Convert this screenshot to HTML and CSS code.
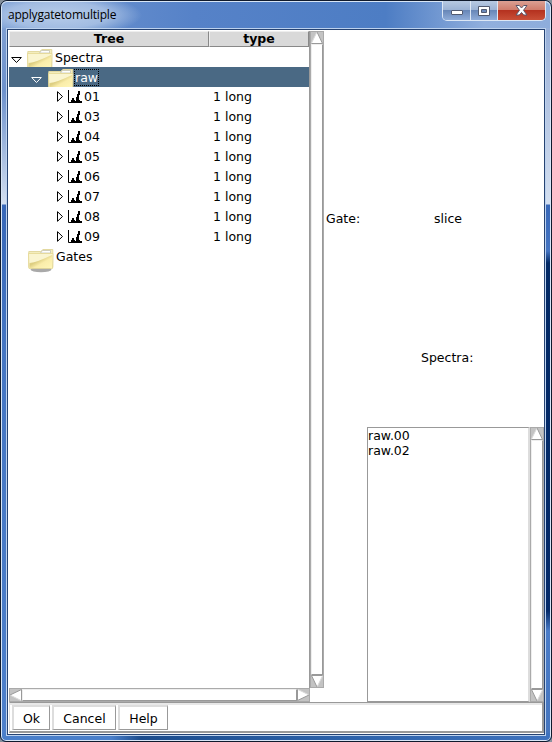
FILE: index.html
```html
<!DOCTYPE html>
<html lang="en">
<head>
<meta charset="utf-8">
<title>applygatetomultiple</title>
<link rel="stylesheet" href="styles.css">
</head>
<body>
<svg class="defs" aria-hidden="true">
  <defs>
    <linearGradient id="fold" x1="0" y1="0" x2="1" y2="1">
      <stop offset="0" stop-color="#eee3a0"/><stop offset=".4" stop-color="#dccd80"/><stop offset=".6" stop-color="#faedaa"/><stop offset="1" stop-color="#fff6b8"/>
    </linearGradient>
    <symbol id="folder" viewBox="0 0 26 24">
      <ellipse cx="13" cy="20.500" rx="10.500" ry="2.800" fill="#a9a9a9"/>
      <path d="M.8 2.500h12l2-2h10v18H.8z" fill="#f3edbd" stroke="#e3d9a0"/>
      <path d="M12.500 4l2-2.500h8V4z" fill="#fff" stroke="#c5c5b4" stroke-width=".8"/>
      <path d="M.5 4.500H25l-.5 15H1z" fill="#faf5d0" stroke="#e2d48b" stroke-width=".7"/>
      <path d="M1.500 14Q10 13 24 6v13H1.500z" fill="url(#fold)"/>
    </symbol>
    <symbol id="chart" viewBox="0 0 14 13">
      <path d="M.5 0v12.500H14" fill="none" stroke="#000"/>
      <path d="M3 12v-2h1V8h2v2h1v1h1V7h1V4h1V1h2v4h-1v5h1v1h2v1z"/>
    </symbol>
    <symbol id="open" viewBox="0 0 11 7"><path d="M.7.5h9.600L5.500 5.500z" fill="none" stroke="currentColor"/></symbol>
    <symbol id="shut" viewBox="0 0 7 11"><path d="M.5.7v9.600L5.500 5.500z" fill="#fff" stroke="#000"/></symbol>
    <symbol id="arrow" viewBox="0 0 12 12">
      <path d="M6 0L11.500 11.500H.5z" fill="#fff"/><path d="M6 0L.5 11" stroke="#ddd" fill="none"/><path d="M6 0L11.500 11.500H.5" stroke="#999" fill="none"/>
    </symbol>
  </defs>
</svg>
<div class="window">
  <header class="titlebar">
    <span class="title">applygatetomultiple</span>
    <div class="controls">
      <span class="ctl min"><svg width="12" height="5"><rect x=".5" y=".5" width="11" height="4" rx=".5" fill="#fff" stroke="#515a70"/></svg></span>
      <span class="ctl max"><svg width="12" height="10"><path d="M.5.5h11v9H.5zM3.500 3.500v3h5v-3z" fill="#fff" fill-rule="evenodd" stroke="#515a70"/></svg></span>
      <span class="ctl close"><svg width="13" height="11"><path d="M1 .5h3.300L6.500 3 8.700.5H12L8.500 5.300 12 10H8.700L6.500 7.500 4.300 10H1l3.500-4.700z" fill="#fff" stroke="#59566a"/></svg></span>
    </div>
  </header>
  <main class="client">
    <div class="content">
      <section class="left">
        <div class="treewrap">
          <div class="tree">
            <div class="head"><span class="h1">Tree</span><span class="h2">type</span></div>
            <div class="row root"><svg class="open"><use href="#open"/></svg><svg class="folder"><use href="#folder"/></svg><span>Spectra</span></div>
            <div class="row sub selected"><svg class="open"><use href="#open"/></svg><svg class="folder"><use href="#folder"/></svg><span class="focus">raw</span></div>
            <div class="row leaf"><svg class="shut"><use href="#shut"/></svg><svg class="chart"><use href="#chart"/></svg><span class="name">01</span><span>1 long</span></div>
            <div class="row leaf"><svg class="shut"><use href="#shut"/></svg><svg class="chart"><use href="#chart"/></svg><span class="name">03</span><span>1 long</span></div>
            <div class="row leaf"><svg class="shut"><use href="#shut"/></svg><svg class="chart"><use href="#chart"/></svg><span class="name">04</span><span>1 long</span></div>
            <div class="row leaf"><svg class="shut"><use href="#shut"/></svg><svg class="chart"><use href="#chart"/></svg><span class="name">05</span><span>1 long</span></div>
            <div class="row leaf"><svg class="shut"><use href="#shut"/></svg><svg class="chart"><use href="#chart"/></svg><span class="name">06</span><span>1 long</span></div>
            <div class="row leaf"><svg class="shut"><use href="#shut"/></svg><svg class="chart"><use href="#chart"/></svg><span class="name">07</span><span>1 long</span></div>
            <div class="row leaf"><svg class="shut"><use href="#shut"/></svg><svg class="chart"><use href="#chart"/></svg><span class="name">08</span><span>1 long</span></div>
            <div class="row leaf"><svg class="shut"><use href="#shut"/></svg><svg class="chart"><use href="#chart"/></svg><span class="name">09</span><span>1 long</span></div>
            <div class="row root last"><svg class="folder"><use href="#folder"/></svg><span>Gates</span></div>
          </div>
          <div class="scroll vert"><svg class="arr"><use href="#arrow"/></svg><div class="thumb"></div><svg class="arr down"><use href="#arrow"/></svg></div>
        </div>
        <div class="scroll horiz"><svg class="arr toleft"><use href="#arrow"/></svg><div class="thumb"></div><svg class="arr toright"><use href="#arrow"/></svg></div>
      </section>
      <section class="right">
        <div class="gate"><span class="label">Gate:</span><span class="value">slice</span></div>
        <div class="caption">Spectra:</div>
        <div class="listwrap">
          <div class="list"><div>raw.00</div><div>raw.02</div></div>
          <div class="scroll vert"><svg class="arr"><use href="#arrow"/></svg><div class="thumb"></div><svg class="arr down"><use href="#arrow"/></svg></div>
        </div>
      </section>
    </div>
    <footer class="actions"><button class="ok">Ok</button><button class="cancel">Cancel</button><button class="help">Help</button></footer>
  </main>
</div>
</body>
</html>
```
FILE: styles.css
```css
* { box-sizing: border-box; }
html { background: #85909c; }
body { margin: 0; font: 12.5px/15px "DejaVu Sans", sans-serif; color: #000; }
svg { display: block; flex: none; }
.defs { position: absolute; width: 0; height: 0; }
.window {
  width: 552px; height: 742px; padding: 0 6px 6px;
  border: 1px solid #101a2c; border-radius: 7px 7px 6px 6px;
  box-shadow: inset 0 0 0 1px #d8e6f6;
  background:
    linear-gradient(90deg, #4a7fca 0, #4a7fca 110px, #1c4c8c 140px, #2c61a8 330px, #3f72bd) 0 100% / 100% 8px no-repeat,
    linear-gradient(#86a5d5 0, #a5b9dc 60px, #d3dff0 203px, #3767b8 204px, #4474c2 250px, #022966 262px, #052b6a 610px, #4a7cc8 630px, #4474bd) 100% 0 / 9px 100% no-repeat,
    linear-gradient(#86a5d5 0, #6d91cc 90px, #d3dff0 203px, #3767b8 204px, #4576c3 350px, #4d80cb) 0 0 / 9px 100% no-repeat,
    #5280c6;
}
.titlebar {
  height: 27px; margin: 0 -5px; display: flex; justify-content: space-between; border-top: 1px solid #d8e6f6; border-radius: 6px 6px 0 0;
  background: radial-gradient(ellipse 85px 22px at 55px 13px, #b7cce9 0, #a2bce2 60%, transparent), linear-gradient(90deg, #7298d1, #5682c8 35%, #4d7dc4 70%, #91afdd 88%, #8eaddb);
}
.title { padding: 5px 0 0 6px; font: 12px/16px "Open Sans", sans-serif; letter-spacing: -.2px; }
.controls { display: flex; height: 20px; margin: -1px 4px 0 0; border: 1px solid #dce7f5; border-top: 0; border-radius: 0 0 5px 5px; overflow: hidden; }
.ctl { width: 27px; display: flex; align-items: center; justify-content: center; border-right: 1px solid #dce7f5; background: linear-gradient(#b7c9e2 0, #9bb2d4 48%, #6887b8 50%, #8facd8); }
.min { width: 28px; padding-top: 4px; }
.close { width: 47px; border: 0; background: linear-gradient(#dba093 0, #cf7b6a 48%, #b53220 50%, #c94f37); }
.client { height: 706px; margin-top: 1px; padding: 1px 0 1px 1px; border: 1px solid #264372; background: #fff; outline: 1px solid #bdd2ee; display: flex; flex-direction: column; }
.content { flex: 1; min-height: 0; display: flex; }
.left { width: 315px; display: flex; flex-direction: column; }
.treewrap { height: 657px; display: flex; }
.tree { width: 301px; border-right: 1px solid #999; }
.head { height: 16px; display: flex; font-weight: bold; text-align: center; line-height: 13px; }
.head span { height: 16px; background: #d9d9d9; border: 1px solid #888; border-top-color: #eee; border-left-color: #eee; }
.h1 { width: 200px; }
.h2 { width: 100px; }
.row { height: 20px; display: flex; align-items: center; white-space: pre; }
.root, .sub { overflow: hidden; }
.root { padding-left: 2px; }
.sub { padding-left: 22px; }
.leaf { padding: 0 0 2px 48px; }
.open { width: 11px; height: 7px; margin: 6px 6px 0 0; }
.folder { width: 26px; height: 24px; margin: 2px 1px 0 0; align-self: flex-start; }
.root .folder { margin-left: -1px; margin-right: 2px; }
.row.last { padding-left: 20px; overflow: visible; }
.last span { margin-top: -2px; }
.selected { background: #4a6984; color: #fff; }
.focus { outline: 1px dotted #000; }
.shut { width: 7px; height: 11px; margin-right: 4px; }
.chart { width: 14px; height: 13px; margin-right: 2px; }
.name { width: 129px; }
.scroll { display: flex; background: #c3c3c3; border: 1px solid #aaa; }
.vert { width: 14px; flex-direction: column; }
.horiz { width: 301px; height: 14px; }
.arr { width: 12px; height: 12px; }
.thumb { flex: 1; background: #fff; border: 1px solid #999; border-left-color: #eee; border-top-color: #eee; }
.down { transform: rotate(180deg); }
.toleft { transform: rotate(-90deg); }
.toright { transform: rotate(90deg); }
.right { flex: 1; display: flex; flex-direction: column; }
.gate { height: 318px; display: flex; padding-top: 180px; }
.label { width: 110px; padding-left: 2px; }
.caption { height: 78px; padding: 1px 0 0 97px; }
.listwrap { flex: 1; margin-left: 43px; display: flex; }
.list { flex: 1; border: 1px solid #999; border-right: 2px solid #ddd; }
.actions { height: 31px; border: solid #999; border-width: 1px 2px 2px 1px; border-left-color: #ddd; box-shadow: inset 0 2px #e8e8e8; padding: 2px; display: flex; gap: 2px; }
.actions button { margin: 0; padding: 0; height: 25px; border: 2px solid #ddd; border-right: 1px solid #999; border-bottom: 1px solid #999; background: #fff; font: 12.5px/15px "DejaVu Sans", sans-serif; color: #000; }
.ok { width: 38px; }
.cancel { width: 64px; }
.help { width: 50px; }
```
